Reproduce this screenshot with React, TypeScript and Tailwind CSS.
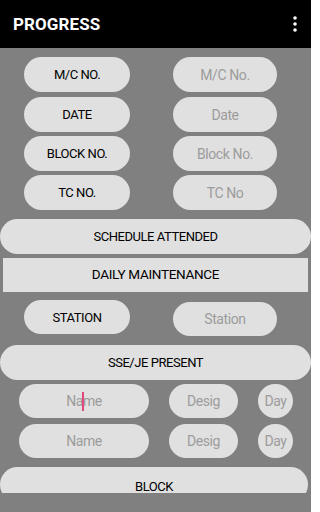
import React from "react";

const pill = "flex items-center justify-center rounded-full bg-[#e0e0e0]";
const label = "text-[13px] tracking-[-0.45px] text-black leading-none";
const ph = "text-[14px] tracking-[-0.4px] text-[#9c9c9c] leading-none";

function Row({ l, r, mt }: { l: string; r: string; mt: string }) {
  return (
    <div className={`flex ${mt}`}>
      <div className={`${pill} ml-[24px] h-[35px] w-[106px]`}>
        <span className={label}>{l}</span>
      </div>
      <div className={`${pill} ml-[43px] h-[35px] w-[104px]`}>
        <span className={ph}>{r}</span>
      </div>
    </div>
  );
}

export default function App() {
  return (
    <div
      className="w-[311px] h-[512px] bg-[#808080] overflow-hidden"
      style={{ fontFamily: "Roboto, 'Liberation Sans', sans-serif" }}
    >
      <div className="h-[48px] bg-black flex items-center justify-between pl-[13px] pr-[14px]">
        <span className="text-white text-[17px] font-bold tracking-[0.1px] mt-[1px]">PROGRESS</span>
        <svg width="4" height="16" viewBox="0 0 4 16">
          <circle cx="2" cy="2" r="1.8" fill="#fff" />
          <circle cx="2" cy="8" r="1.8" fill="#fff" />
          <circle cx="2" cy="14" r="1.8" fill="#fff" />
        </svg>
      </div>
      <div className="h-[445px] overflow-hidden flex flex-col">
        <Row l="M/C NO." r="M/C No." mt="mt-[9px]" />
        <Row l="DATE" r="Date" mt="mt-[5px]" />
        <Row l="BLOCK NO." r="Block No." mt="mt-[4px]" />
        <Row l="TC NO." r="TC No" mt="mt-[4px]" />
        <div className={`${pill} mt-[9px] h-[35px] w-[311px] shrink-0`}>
          <span className={label}>SCHEDULE ATTENDED</span>
        </div>
        <div className="mt-[4px] mx-[3px] h-[34px] shrink-0 bg-[#e0e0e0] flex items-center justify-center">
          <span className="text-[13.5px] tracking-[-0.3px] text-black leading-none">DAILY MAINTENANCE</span>
        </div>
        <div className="flex mt-[8px] items-start shrink-0">
          <div className={`${pill} ml-[24px] h-[34px] w-[106px]`}>
            <span className={label}>STATION</span>
          </div>
          <div className={`${pill} ml-[43px] mt-[2px] h-[34px] w-[104px]`}>
            <span className={ph}>Station</span>
          </div>
        </div>
        <div className={`${pill} mt-[9px] h-[35px] w-[311px] shrink-0`}>
          <span className={label}>SSE/JE PRESENT</span>
        </div>
        <div className="flex mt-[4px] shrink-0">
          <div className={`${pill} ml-[19px] h-[34px] w-[130px]`}>
            <span className={`${ph} flex items-center`}>
              Na
              <span className="inline-block w-[1.5px] h-[19px] bg-[#e0457b] -mx-[0.75px]" />
              me
            </span>
          </div>
          <div className={`${pill} ml-[20px] h-[34px] w-[69px]`}>
            <span className={ph}>Desig</span>
          </div>
          <div className={`${pill} ml-[20px] h-[34px] w-[35px]`}>
            <span className={ph}>Day</span>
          </div>
        </div>
        <div className="flex mt-[6px] shrink-0">
          <div className={`${pill} ml-[19px] h-[34px] w-[130px]`}>
            <span className={ph}>Name</span>
          </div>
          <div className={`${pill} ml-[20px] h-[34px] w-[69px]`}>
            <span className={ph}>Desig</span>
          </div>
          <div className={`${pill} ml-[20px] h-[34px] w-[35px]`}>
            <span className={ph}>Day</span>
          </div>
        </div>
        <div className={`${pill} mt-[9px] h-[35px] w-[308px] shrink-0 items-start`}>
          <span className={`${label} mt-[13px]`}>BLOCK</span>
        </div>
      </div>
    </div>
  );
}
